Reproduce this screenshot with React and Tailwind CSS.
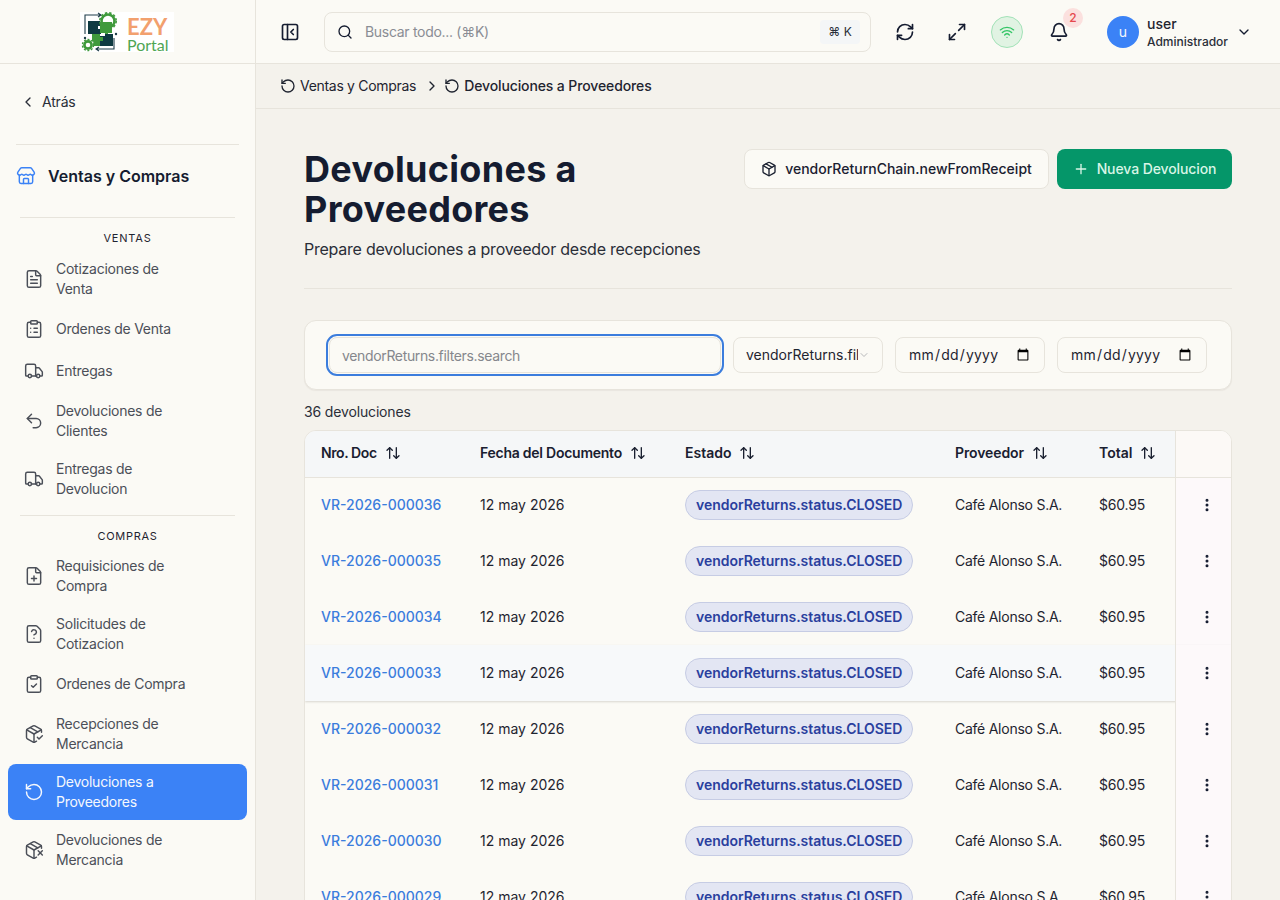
import React from "react";
import {
  PanelLeftClose, Search, RefreshCw, Maximize2, Wifi, Bell, ChevronDown, ChevronLeft, ChevronRight,
  RotateCcw, Store, FileText, ClipboardList, Truck, Undo2, FilePlus, FileQuestion, ClipboardCheck,
  PackageCheck, PackageX, Package, Plus, ArrowUpDown, EllipsisVertical,
} from "lucide-react";

const ventas = [
  [FileText, "Cotizaciones de Venta"],
  [ClipboardList, "Ordenes de Venta"],
  [Truck, "Entregas"],
  [Undo2, "Devoluciones de Clientes"],
  [Truck, "Entregas de Devolucion"],
];
const compras = [
  [FilePlus, "Requisiciones de Compra"],
  [FileQuestion, "Solicitudes de Cotizacion"],
  [ClipboardCheck, "Ordenes de Compra"],
  [PackageCheck, "Recepciones de Mercancia"],
  [RotateCcw, "Devoluciones a Proveedores", true],
  [PackageX, "Devoluciones de Mercancia"],
];
const rows = ["000036", "000035", "000034", "000033", "000032", "000031", "000030", "000029"];

function NavItem({ icon: Icon, label, active }) {
  return (
    <a className={`flex min-h-10 items-center gap-3 rounded-lg px-4 py-2 text-sm leading-5 tracking-[-0.25px] ${active ? "bg-[#3b82f6] text-[#f5f8fd]" : "text-[#4b4f58]"}`}>
      <Icon size={20} strokeWidth={1.75} className="shrink-0" />
      <span className="w-[136px]">{label}</span>
    </a>
  );
}

function Logo() {
  return (
    <div className="flex h-10 w-[94px] items-center bg-white">
      <svg width="42" height="40" viewBox="0 0 42 40" fill="none" className="shrink-0">
        <path d="M5 22V3h15M18 1l3 2-3 2" stroke="#1f3d4a" strokeWidth="1.1" />
        <path d="M17 37h17V26M19 35l-3 2 3 2" stroke="#1f3d4a" strokeWidth="1.1" />
        <circle cx="5" cy="26" r="1.2" fill="#1f3d4a" />
        <circle cx="36" cy="22" r="1.2" fill="#1f3d4a" />
        <path d="M8 9h12v5h-2v3h3v5H8z" fill="#0f3a42" />
        <circle cx="28" cy="9" r="6.5" stroke="#3f9a3c" strokeWidth="2.6" />
        <circle cx="28" cy="9" r="8.2" stroke="#3f9a3c" strokeWidth="1.6" strokeDasharray="2.4 2" />
        <path d="M20 10h12v11h-4v3h-3v-3h-5z" fill="#3f9a3c" />
        <path d="M20 24h5v-2h8v12H19v-4h1z" fill="#0f3a42" />
        <path d="M12 22h8v3h3v4h-3v5h-6l-1-5h-1z" fill="#3f9a3c" />
        <circle cx="8" cy="33" r="3.6" stroke="#3f9a3c" strokeWidth="2.6" />
        <circle cx="8" cy="33" r="5.6" stroke="#3f9a3c" strokeWidth="1.4" strokeDasharray="2 1.6" />
      </svg>
      <div className="mt-1 ml-[5px] flex flex-col font-['Lato',sans-serif]">
        <span className="text-[22px] leading-[22px] font-bold text-[#f2a06e]">EZY</span>
        <span className="text-[16px] leading-[14px] text-[#4fa653]">Portal</span>
      </div>
    </div>
  );
}

function Sidebar() {
  return (
    <aside className="flex h-full w-64 shrink-0 flex-col border-r border-[#e7e4dc] bg-[#fbfaf5]">
      <div className="flex h-16 shrink-0 items-center justify-center border-b border-[#e7e4dc] pr-[1px]">
        <Logo />
      </div>
      <div className="mt-[26px] flex h-6 items-center gap-1.5 pl-5 text-sm text-[#2a2e38]">
        <ChevronLeft size={16} strokeWidth={2} />
        <span className="tracking-[-0.2px]">Atrás</span>
      </div>
      <div className="mx-4 mt-[30px] border-t border-[#e7e4dc]" />
      <div className="flex items-center gap-3 pt-[17px] pb-[27px] pl-4">
        <Store size={20} strokeWidth={1.75} className="text-[#3b82f6]" />
        <span className="text-base leading-7 font-semibold text-[#151c30]">Ventas y Compras</span>
      </div>
      <div className="mx-5 border-t border-[#e7e4dc]" />
      <div className="mt-3 text-center text-[11px] leading-4 tracking-[0.8px] text-[#1f2430]">VENTAS</div>
      <nav className="mx-2 mt-[5px] flex flex-col gap-0.5">
        {ventas.map(([I, l]) => <NavItem key={l} icon={I} label={l} />)}
      </nav>
      <div className="mx-5 mt-2 border-t border-[#e7e4dc]" />
      <div className="mt-3 text-center text-[11px] leading-4 tracking-[0.7px] text-[#1f2430]">COMPRAS</div>
      <nav className="mx-2 mt-1 flex flex-col gap-0.5">
        {compras.map(([I, l, a]) => <NavItem key={l} icon={I} label={l} active={a} />)}
      </nav>
    </aside>
  );
}

function Header() {
  return (
    <header className="flex h-16 shrink-0 items-center border-b border-[#e7e4dc] bg-[#fbfaf5]">
      <PanelLeftClose size={20} strokeWidth={2} className="ml-6 text-[#151c30]" />
      <div className="ml-6 flex h-10 w-[547px] items-center rounded-lg border border-[#e7e4dc] bg-[#fbfaf5] pr-2.5 pl-3">
        <Search size={16} strokeWidth={2} className="text-[#151c30]" />
        <span className="ml-3 flex-1 text-sm tracking-[-0.3px] text-[#8a8d94]">Buscar todo... (⌘K)</span>
        <span className="flex h-6 w-10 items-center justify-center rounded bg-[#f4f6f7] text-xs text-[#2a2e38]">⌘ K</span>
      </div>
      <RefreshCw size={20} strokeWidth={2} className="ml-6 text-[#151c30]" />
      <Maximize2 size={20} strokeWidth={2} className="ml-8 text-[#151c30]" />
      <div className="ml-6 flex size-8 items-center justify-center rounded-full border border-[#a3e2b8] bg-[#e1f3e3]">
        <Wifi size={16} strokeWidth={2} className="text-[#34c566]" />
      </div>
      <div className="relative ml-[26px] flex size-5 items-center justify-center">
        <Bell size={20} strokeWidth={2} className="text-[#151c30]" />
        <span className="absolute -top-[14px] left-[14px] flex size-5 items-center justify-center rounded-full bg-[#fbe0de] text-xs font-medium text-[#e5484d]">2</span>
      </div>
      <div className="ml-[38px] flex size-8 items-center justify-center rounded-full bg-[#3b82f6] text-sm text-[#f5f8fd]">u</div>
      <div className="mt-0.5 ml-2 flex flex-col">
        <span className="text-sm leading-[18px] font-medium text-[#1f2430]">user</span>
        <span className="text-xs leading-[18px] font-medium text-[#2a2e38]">Administrador</span>
      </div>
      <ChevronDown size={16} strokeWidth={2} className="ml-2 text-[#151c30]" />
    </header>
  );
}

function Breadcrumb() {
  return (
    <div className="flex h-[45px] shrink-0 items-center border-b border-[#e7e4dc] bg-[#f4f2ec] pl-6 text-sm text-[#1f2430]">
      <RotateCcw size={16} strokeWidth={2} />
      <span className="ml-1 tracking-[-0.3px]">Ventas y Compras</span>
      <ChevronRight size={16} strokeWidth={2} className="mr-1 ml-2" />
      <RotateCcw size={16} strokeWidth={2} />
      <span className="ml-1 font-medium tracking-[-0.12px]">Devoluciones a Proveedores</span>
    </div>
  );
}

function Th({ children, track = "" }) {
  return (
    <th className={`h-[46px] px-4 pb-0.5 text-left text-sm font-semibold text-[#1a2030] ${track}`}>
      <span className="inline-flex items-center gap-2">
        {children}
        <ArrowUpDown size={16} strokeWidth={2} />
      </span>
    </th>
  );
}

function Row({ id, hover }) {
  const bg = hover ? "bg-[#f7f9fa] shadow-[0_1px_2px_rgba(60,55,40,0.18)]" : "";
  return (
    <tr className={`h-14 text-sm text-[#1f2430] ${bg}`}>
      <td className="px-4 font-medium text-[#3b7ddd]">VR-2026-{id}</td>
      <td className="px-4">12 may 2026</td>
      <td className="px-4">
        <span className="inline-flex h-[30px] items-center rounded-full border border-[#c6cce4] bg-[#e3e6f3] px-2.5 font-semibold tracking-[-0.03px] text-[#2a3f9e]">
          vendorReturns.status.CLOSED
        </span>
      </td>
      <td className="px-4 tracking-[-0.25px]">Café Alonso S.A.</td>
      <td className="px-4 tracking-[-0.2px]">$60.95</td>
      <td className="border-l border-[#e7e4dc] bg-[#fdf9fa] pl-2 text-[#151c30]">
        <div className="flex justify-center">
          <EllipsisVertical size={16} strokeWidth={2.5} />
        </div>
      </td>
    </tr>
  );
}

export default function App() {
  return (
    <div className="flex h-screen overflow-hidden bg-[#f4f2ec] font-['Inter',sans-serif] text-[#1f2430]">
      <Sidebar />
      <div className="flex h-full min-w-0 flex-1 flex-col">
        <Header />
        <Breadcrumb />
        <main className="min-h-0 flex-1 overflow-hidden px-12 pt-10">
          <div className="flex items-start justify-between">
            <div className="w-[400px]">
              <h1 className="text-4xl leading-10 font-bold tracking-[0.3px] text-[#151c30]">Devoluciones a Proveedores</h1>
            </div>
            <div className="flex gap-2">
              <button className="flex h-10 w-[305px] items-center justify-center gap-2 rounded-lg border border-[#e7e4dc] bg-[#fbfaf5] text-sm font-medium text-[#1a2030]">
                <Package size={16} strokeWidth={2} />
                vendorReturnChain.newFromReceipt
              </button>
              <button className="flex h-10 w-[175px] items-center justify-center gap-2 rounded-lg bg-[#059669] text-sm font-medium tracking-[-0.1px] text-[#d8f5e6]">
                <Plus size={16} strokeWidth={2} />
                Nueva Devolucion
              </button>
            </div>
          </div>
          <p className="mt-2 text-base leading-6 tracking-[-0.24px] text-[#2a2e38]">Prepare devoluciones a proveedor desde recepciones</p>
          <div className="mt-[27px] mb-[31px] border-t border-[#e7e4dc]" />

          <div className="flex gap-3 rounded-xl border border-[#e7e4dc] bg-[#fbfaf5] px-6 py-4 shadow-[0_1px_1px_rgba(60,55,40,0.06)]">
            <input
              placeholder="vendorReturns.filters.search"
              className="h-9 min-w-0 flex-1 rounded-lg border border-[#e7e4dc] bg-[#fbfaf5] px-3 text-sm tracking-[-0.35px] outline-2 outline-offset-1 outline-[#3b7ddd] placeholder:text-[#85878c]"
            />
            <div className="relative w-[150px]">
              <select className="h-9 w-full appearance-none rounded-lg border border-[#e7e4dc] bg-[#fbfaf5] pr-6 pl-3 text-sm text-[#1f2430]">
                <option>vendorReturns.filters.status</option>
              </select>
              <ChevronDown size={12} strokeWidth={1.5} className="absolute top-3 right-[13px] text-[#a0a2a6]" />
            </div>
            <input type="date" className="h-9 w-[150px] rounded-lg border border-[#e7e4dc] bg-[#fbfaf5] px-3 text-sm tracking-[0.2px] text-[#1f2430]" />
            <input type="date" className="h-9 w-[150px] rounded-lg border border-[#e7e4dc] bg-[#fbfaf5] px-3 text-sm tracking-[0.2px] text-[#1f2430]" />
          </div>

          <p className="mt-3 text-sm leading-5 tracking-[-0.15px] text-[#2a2e38]">36 devoluciones</p>

          <div className="mt-2 overflow-hidden rounded-t-xl border border-[#e7e4dc] bg-[#fbfaf5]">
            <table className="w-full table-fixed border-collapse">
              <colgroup>
                <col className="w-[159px]" />
                <col className="w-[205px]" />
                <col className="w-[270px]" />
                <col className="w-[144px]" />
                <col className="w-[92px]" />
                <col className="w-[56px]" />
              </colgroup>
              <thead>
                <tr className="border-b border-[#e7e4dc] bg-[#f5f7f8]">
                  <Th track="tracking-[-0.4px]">Nro. Doc</Th>
                  <Th track="tracking-[-0.25px]">Fecha del Documento</Th>
                  <Th>Estado</Th>
                  <Th track="tracking-[-0.1px]">Proveedor</Th>
                  <Th>Total</Th>
                  <th className="border-l border-[#e7e4dc] bg-[#fcf9f6]" />
                </tr>
              </thead>
              <tbody>
                {rows.map((r) => <Row key={r} id={r} hover={r === "000033"} />)}
              </tbody>
            </table>
          </div>
        </main>
      </div>
    </div>
  );
}
